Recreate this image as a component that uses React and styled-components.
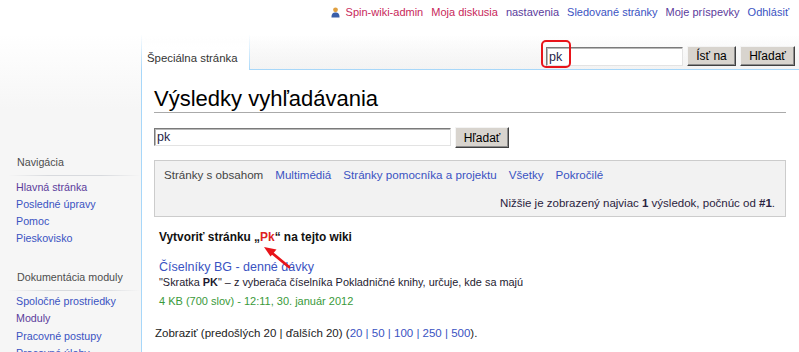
import styled, { createGlobalStyle } from "styled-components";

const GlobalStyle = createGlobalStyle`
  html, body { margin: 0; padding: 0; }
  body {
    background: #f6f6f6 linear-gradient(to bottom, #fff 0, #fff 34px, #f6f6f6 110px) no-repeat;
    font-family: "Liberation Sans", Arial, sans-serif;
    color: #222;
  }
`;

const BLUE = "#3a53c2";
const VISITED = "#5b3c9c";
const NEW = "#c8285a";

const Page = styled.div`
  position: relative;
  width: 799px;
  height: 352px;
  overflow: hidden;
`;

const PersonalBar = styled.div`
  height: 35px;
  box-sizing: border-box;
  display: flex;
  justify-content: flex-end;
  align-items: flex-start;
  gap: 8px;
  padding: 4px 10px 0 0;
  font-size: 11px;
  line-height: 16px;
`;

const Link = styled.a`
  color: ${(p) => (p.$kind === "new" ? NEW : p.$kind === "visited" ? VISITED : BLUE)};
  text-decoration: none;
  cursor: pointer;
`;

const UserItem = styled.span`
  display: flex;
  align-items: center;
  gap: 6px;
`;

const Row = styled.div`
  display: flex;
  height: 317px;
`;

const Sidebar = styled.div`
  width: 141px;
  flex-shrink: 0;
  padding-top: 120px;
  box-sizing: border-box;
`;

const Portal = styled.div`
  margin-top: ${(p) => p.$gap || 0}px;
`;

const PortalHeading = styled.h3`
  margin: 0 0 0 8px;
  padding: 0 0 6px 9px;
  font-size: 10.7px;
  line-height: 15px;
  font-weight: normal;
  color: #4d4d4d;
  background: linear-gradient(to right, rgba(200, 204, 209, 0), #d8dade 30%, #d8dade 70%, rgba(200, 204, 209, 0)) no-repeat bottom / 100% 1px;
`;

const PortalList = styled.ul`
  list-style: none;
  margin: 0;
  padding: 2.5px 0 0 16px;
  font-size: 10.7px;
  line-height: 17.3px;
`;

const Main = styled.div`
  flex: 1;
  min-width: 0;
  display: flex;
  flex-direction: column;
`;

const HeaderRow = styled.div`
  display: flex;
  height: 35px;
`;

const Tab = styled.div`
  width: 102px;
  box-sizing: content-box;
  display: flex;
  align-items: flex-end;
  padding: 0 0 5px 5px;
  font-size: 11.4px;
  line-height: 14px;
  color: #333;
  background: linear-gradient(to bottom, rgba(255, 255, 255, 0) 0, #fff 45%);
  border-style: solid;
  border-width: 0 1px;
  border-image: linear-gradient(to bottom, rgba(167, 215, 249, 0) 0, #a7d7f9 100%) 1;
`;

const SearchStrip = styled.div`
  flex: 1;
  box-sizing: border-box;
  display: flex;
  justify-content: flex-end;
  align-items: flex-end;
  gap: 4px;
  padding: 0 4px 3px 0;
  border-bottom: 1px solid #a7d7f9;
  background: linear-gradient(to bottom, rgba(240, 240, 240, 0) 0, rgba(238, 238, 238, 0.6) 100%);
`;

const TextInput = styled.input`
  width: ${(p) => p.$w}px;
  height: ${(p) => p.$h}px;
  box-sizing: border-box;
  margin: ${(p) => p.$mt || 0}px 0 0;
  padding: 0 2px;
  border: 1px solid;
  border-color: #7a7a7a #e3e3e3 #e3e3e3 #7a7a7a;
  box-shadow: inset 1px 1px 0 #b8b8b8;
  background: #fff;
  font-family: "Liberation Sans", Arial, sans-serif;
  font-size: 12.5px;
  color: #2a1f4a;
  outline: none;
`;

const Button = styled.button`
  width: ${(p) => p.$w}px;
  height: ${(p) => p.$h || 20}px;
  box-sizing: border-box;
  padding: 0;
  border: 1px solid;
  border-color: #f4f4f4 #404040 #404040 #f4f4f4;
  box-shadow: inset -1px -1px 0 #8c8c8c;
  background: #d8d4ce;
  font-family: "Liberation Sans", Arial, sans-serif;
  font-size: 12px;
  color: #000;
`;

const Content = styled.div`
  flex: 1;
  background: #fff;
  border-left: 1px solid #a7d7f9;
  padding: 0 13px 0 12px;
`;

const Heading = styled.h1`
  margin: 16px 0 0;
  padding: 0;
  font-size: 22px;
  line-height: 26px;
  font-weight: normal;
  color: #000;
  border-bottom: 1px solid #aaa;
`;

const SearchForm = styled.div`
  display: flex;
  align-items: flex-start;
  gap: 4px;
  margin-top: 14px;
`;

const ResultsBox = styled.div`
  margin-top: 12px;
  border: 1px solid #ccc;
  background: #f2f2f2;
  padding: 6px 10px 5px 9px;
  font-size: 11.6px;
  line-height: 16px;
`;

const TypeTabs = styled.div`
  display: flex;
  gap: 12px;
`;

const TypeTab = styled.span`
  color: ${(p) => (p.$active ? "#444" : BLUE)};
`;

const ResultInfo = styled.div`
  margin-top: 12px;
  text-align: right;
  font-size: 11.5px;
  color: #2a2340;
`;

const Results = styled.div`
  padding-left: 5px;
`;

const CreateLine = styled.div`
  margin-top: 11.5px;
  font-size: 11.9px;
  line-height: 16px;
  font-weight: bold;
  color: #111;
`;

const RedText = styled.span`
  color: #dd2222;
`;

const ResultTitle = styled.div`
  margin-top: 14px;
  font-size: 12.5px;
  line-height: 16px;
`;

const Snippet = styled.div`
  font-size: 10.9px;
  line-height: 15px;
  color: #1e1a30;
`;

const Meta = styled.div`
  margin-top: 4.5px;
  font-size: 11px;
  line-height: 15px;
  color: #3a9a3a;
`;

const Pager = styled.div`
  margin-top: 15.5px;
  padding-left: 1px;
  font-size: 11.5px;
  line-height: 16px;
  color: #222;
`;

const Highlight = styled.div`
  position: absolute;
  left: 541px;
  top: 40px;
  width: 30px;
  height: 28px;
  box-sizing: border-box;
  border: 2.5px solid #e8141a;
  border-radius: 5px;
  pointer-events: none;
`;

const ArrowSvg = styled.svg`
  position: absolute;
  left: 255px;
  top: 240px;
  pointer-events: none;
`;

const UserIcon = () => (
  <svg width="9" height="11" viewBox="0 0 9 11">
    <circle cx="4.5" cy="2.8" r="2.4" fill="#e0a040" />
    <path d="M0.5 10.5 C0.5 6.6 2 5.6 4.5 5.6 C7 5.6 8.5 6.6 8.5 10.5 Z" fill="#3a5ea8" />
  </svg>
);

const Sep = () => <Link> | </Link>;

export default function App() {
  return (
    <Page>
      <GlobalStyle />
      <PersonalBar>
        <UserItem>
          <UserIcon />
          <Link $kind="new">Spin-wiki-admin</Link>
        </UserItem>
        <Link $kind="new">Moja diskusia</Link>
        <Link $kind="visited">nastavenia</Link>
        <Link>Sledované stránky</Link>
        <Link $kind="visited">Moje príspevky</Link>
        <Link>Odhlásiť</Link>
      </PersonalBar>
      <Row>
        <Sidebar>
          <Portal>
            <PortalHeading>Navigácia</PortalHeading>
            <PortalList>
              <li><Link $kind="visited">Hlavná stránka</Link></li>
              <li><Link>Posledné úpravy</Link></li>
              <li><Link>Pomoc</Link></li>
              <li><Link>Pieskovisko</Link></li>
            </PortalList>
          </Portal>
          <Portal $gap={22}>
            <PortalHeading>Dokumentácia moduly</PortalHeading>
            <PortalList>
              <li><Link>Spoločné prostriedky</Link></li>
              <li><Link $kind="visited">Moduly</Link></li>
              <li><Link>Pracovné postupy</Link></li>
              <li><Link>Pracovné úlohy</Link></li>
            </PortalList>
          </Portal>
        </Sidebar>
        <Main>
          <HeaderRow>
            <Tab>Špeciálna stránka</Tab>
            <SearchStrip>
              <TextInput $w={137} $h={19} defaultValue="pk" />
              <Button $w={49}>Ísť na</Button>
              <Button $w={55}>Hľadať</Button>
            </SearchStrip>
          </HeaderRow>
          <Content>
            <Heading>Výsledky vyhľadávania</Heading>
            <SearchForm>
              <TextInput $w={297} $h={18} $mt={1} defaultValue="pk" />
              <Button $w={54} $h={21}>Hľadať</Button>
            </SearchForm>
            <ResultsBox>
              <TypeTabs>
                <TypeTab $active>Stránky s obsahom</TypeTab>
                <TypeTab>Multimédiá</TypeTab>
                <TypeTab>Stránky pomocníka a projektu</TypeTab>
                <TypeTab>Všetky</TypeTab>
                <TypeTab>Pokročilé</TypeTab>
              </TypeTabs>
              <ResultInfo>
                Nižšie je zobrazený najviac <b>1</b> výsledok, počnúc od <b>#1</b>.
              </ResultInfo>
            </ResultsBox>
            <Results>
              <CreateLine>
                Vytvoriť stránku „<RedText>Pk</RedText>“ na tejto wiki
              </CreateLine>
              <ResultTitle>
                <Link>Číselníky BG - denné dávky</Link>
              </ResultTitle>
              <Snippet>
                "Skratka <b>PK</b>" – z vyberača číselníka Pokladničné knihy, určuje, kde sa majú
              </Snippet>
              <Meta>4 KB (700 slov) - 12:11, 30. január 2012</Meta>
            </Results>
            <Pager>
              Zobraziť (predošlých 20 | ďalších 20) (<Link>20</Link><Sep /><Link>50</Link>
              <Sep /><Link>100</Link><Sep /><Link>250</Link><Sep /><Link>500</Link>).
            </Pager>
          </Content>
        </Main>
      </Row>
      <Highlight />
      <ArrowSvg width="40" height="32" viewBox="0 0 40 32">
        <line x1="34" y1="27" x2="17" y2="13" stroke="#e8141a" strokeWidth="2.8" strokeLinecap="round" />
        <polygon points="9,7 21.5,9.5 15.5,16.5" fill="#e8141a" />
      </ArrowSvg>
    </Page>
  );
}
